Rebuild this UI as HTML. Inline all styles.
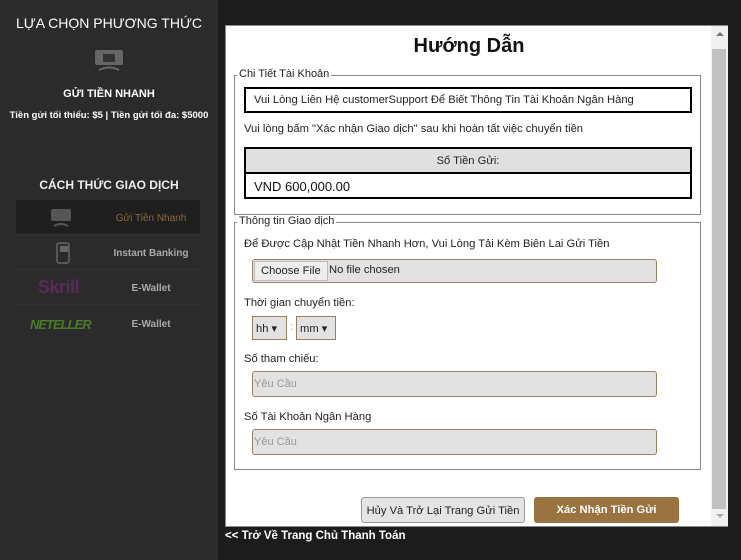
<!DOCTYPE html>
<html><head><meta charset="utf-8"><style>
*{box-sizing:border-box;margin:0;padding:0}
body{width:741px;height:560px;background:#1c1c1c;font-family:"Liberation Sans",sans-serif;position:relative;overflow:hidden}
.a{position:absolute}
#side{left:0;top:0;width:218px;height:560px;background:#2b2b2b}
.c{text-align:center;color:#fff}
.row{left:16px;width:184px;height:35px;border-bottom:1px solid #333}
.row .t{position:absolute;left:85px;width:100px;text-align:center;top:13px;font-size:10px;font-weight:bold;color:#aaa}
#modal{left:225px;top:25px;width:503px;height:502px;background:#fff;border:1px solid #888}
.fs{border:1px solid #888}
.lg{position:absolute;top:-8px;background:#fff;padding:0 2px;font-size:11px;color:#222;left:2px}
.tx{font-size:11.2px;color:#222}
.inp{background:#e2e2e2;border:1px solid #9a8060;border-radius:3px}
.ph{font-size:11px;color:#999;position:absolute;left:1px;top:6px}
</style></head><body>
<div id="side" class="a">
<div class="a c" style="left:0;width:218px;top:15px;font-size:14px">LỰA CHỌN PHƯƠNG THỨC</div>
<svg class="a" style="left:94px;top:48px" width="30" height="24"><rect x="1" y="2" width="28" height="15" rx="2" fill="#666"/><rect x="9" y="6" width="12" height="8" fill="#333"/><path d="M5 22 Q15 17 25 22" stroke="#666" stroke-width="2" fill="none"/></svg>
<div class="a c" style="left:0;width:218px;top:88px;font-size:11px;font-weight:bold">GỬI TIỀN NHANH</div>
<div class="a c" style="left:0;width:218px;top:110px;font-size:9.5px;font-weight:bold">Tiền gửi tối thiểu: $5 | Tiền gửi tối đa: $5000</div>
<div class="a c" style="left:0;width:218px;top:178px;font-size:12px;font-weight:bold;color:#eee">CÁCH THỨC GIAO DỊCH</div>
<div class="a row" style="top:200px;background:#1f1f1f"><svg class="a" style="left:34px;top:8px" width="22" height="20"><rect x="1" y="1" width="20" height="12" rx="2" fill="#555"/><path d="M4 18 Q11 14 18 18" stroke="#555" stroke-width="2" fill="none"/></svg><div class="t" style="color:#8a6a3c;font-weight:normal">Gửi Tiền Nhanh</div></div>
<div class="a row" style="top:235px"><svg class="a" style="left:40px;top:7px" width="14" height="22"><rect x="1" y="1" width="12" height="20" rx="2" fill="none" stroke="#666" stroke-width="1.5"/><rect x="4" y="4" width="8" height="6" fill="#666"/></svg><div class="t">Instant Banking</div></div>
<div class="a row" style="top:270px"><div class="a" style="left:22px;top:7px;font-size:18px;font-weight:bold;color:#5a2a5a;letter-spacing:-.5px">Skrill</div><div class="t">E-Wallet</div></div>
<div class="a row" style="top:306px;border:none"><div class="a" style="left:14px;top:11px;font-size:13px;font-weight:bold;font-style:italic;color:#4a7a2a;letter-spacing:-1px">NETELLER</div><div class="t">E-Wallet</div></div>
</div>
<div id="modal" class="a">
<div class="a" style="left:0;width:486px;top:9px;text-align:center;font-size:20px;font-weight:bold;color:#111">Hướng Dẫn</div>
<div class="a fs" style="left:8px;top:49px;width:467px;height:140px"><div class="lg">Chi Tiết Tài Khoản</div></div>
<div class="a tx" style="left:18px;top:61px;width:448px;height:26px;border:2px solid #000;padding:5px 8px">Vui Lòng Liên Hệ customerSupport Để Biết Thông Tin Tài Khoản Ngân Hàng</div>
<div class="a tx" style="left:18px;top:97px">Vui lòng bấm "Xác nhận Giao dịch" sau khi hoàn tất việc chuyển tiền</div>
<div class="a tx" style="left:18px;top:121px;width:448px;height:27px;border:2px solid #000;background:#e0e0e0;text-align:center;padding-top:6px">Số Tiền Gửi:</div>
<div class="a" style="left:18px;top:146px;width:448px;height:27px;border:2px solid #000;padding:5px 8px;font-size:13px;color:#111">VND 600,000.00</div>
<div class="a fs" style="left:8px;top:196px;width:467px;height:248px"><div class="lg">Thông tin Giao dịch</div></div>
<div class="a tx" style="left:18px;top:212px">Để Được Cập Nhật Tiền Nhanh Hơn, Vui Lòng Tải Kèm Biên Lai Gửi Tiền</div>
<div class="a inp" style="left:26px;top:233px;width:405px;height:24px"><div class="a tx" style="left:1px;top:1px;height:20px;padding:3px 6px;background:#eee;border:1px solid #bbb">Choose File</div><div class="a tx" style="left:76px;top:4px">No file chosen</div></div>
<div class="a tx" style="left:18px;top:271px">Thời gian chuyển tiền:</div>
<div class="a inp" style="left:26px;top:290px;width:35px;height:24px;border-radius:0"><span class="a tx" style="left:3px;top:5px">hh ▾</span></div>
<span class="a tx" style="left:64px;top:295px;color:#999">:</span>
<div class="a inp" style="left:70px;top:290px;width:40px;height:24px;border-radius:0"><span class="a tx" style="left:3px;top:5px">mm ▾</span></div>
<div class="a tx" style="left:18px;top:327px">Số tham chiếu:</div>
<div class="a inp" style="left:26px;top:345px;width:405px;height:26px"><span class="ph">Yêu Cầu</span></div>
<div class="a tx" style="left:18px;top:385px">Số Tài Khoản Ngân Hàng</div>
<div class="a inp" style="left:26px;top:403px;width:405px;height:26px"><span class="ph">Yêu Cầu</span></div>
<div class="a tx" style="left:135px;top:471px;width:164px;height:26px;background:#e4e4e4;border:1px solid #999;border-radius:3px;text-align:center;padding-top:7px">Hủy Và Trở Lại Trang Gửi Tiền</div>
<div class="a" style="left:308px;top:471px;width:145px;height:26px;background:#9a7440;border-radius:3px;text-align:center;padding-top:7px;font-size:11.2px;font-weight:bold;color:#fff">Xác Nhận Tiền Gửi</div>
<div class="a" style="left:485px;top:0;width:17px;height:500px;background:#f1f1f1"><div class="a" style="left:5px;top:6px;border:4px solid transparent;border-bottom:4px solid #777;border-top:0"></div><div class="a" style="left:1px;top:23px;width:14px;height:460px;background:#c1c1c1"></div><div class="a" style="left:5px;top:488px;border:4px solid transparent;border-top:4px solid #aaa;border-bottom:0"></div></div>
</div>
<div class="a" style="left:225px;top:530px;font-size:11.5px;font-weight:bold;color:#fff">&lt;&lt; Trở Về Trang Chủ Thanh Toán</div>
</body></html>
